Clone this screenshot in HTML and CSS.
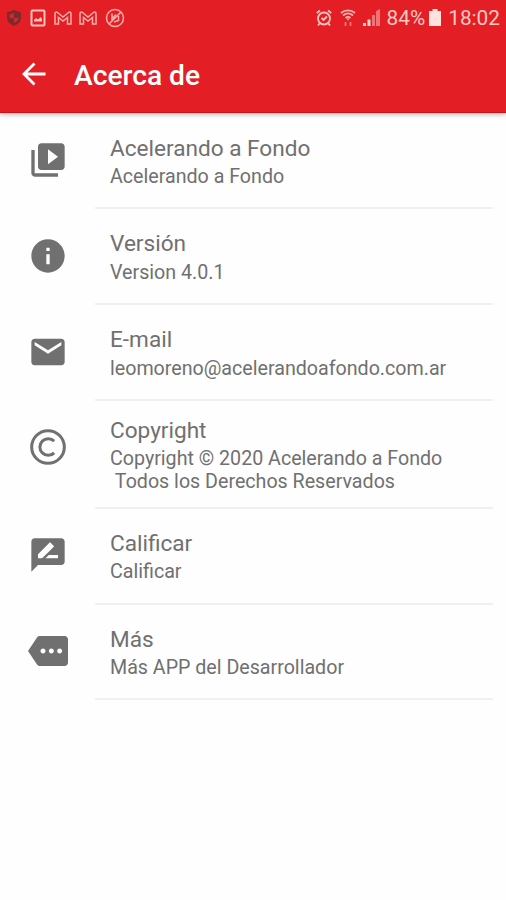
FILE: index.html
```
<!DOCTYPE html>
<html lang="es">
<head>
    <meta charset="utf-8">
    <meta name="viewport" content="width=device-width, initial-scale=1">
    <title>Acerca de</title>
    <link rel="stylesheet" href="styles.css">
</head>
<body>
    <header class="header">
        <div class="status-bar">
            <div class="status-left">
                <svg width="16" height="18" viewBox="0 0 16 18">
                    <path d="M8 1l7 2.500v5c0 4-3 7-7 8.500-4-1.500-7-4.500-7-8.500v-5z" fill="#7b2b2c"/>
                    <path d="M8 4v5H3.500V5.500zM8 9h4.500c-.5 2.500-2 4-4.500 5z" fill="#cf2a2e"/>
                </svg>
                <svg width="16" height="18" viewBox="0 0 16 18" fill="none" stroke="#fbc4bd" stroke-width="2">
                    <rect x="1.500" y="1.500" width="13" height="15" rx="1"/>
                    <path d="M4 12.500V11l2-2 2 1.500L10.500 8l1.500 2v2.500z" fill="#fbc4bd" stroke="none"/>
                </svg>
                <svg width="18" height="14" viewBox="0 0 18 14" fill="none" stroke="#f9b0aa" stroke-width="1.500">
                    <path d="M1 13V2.500C1 1 2.500.7 3.500 1.500L9 6l5.500-4.500C15.500.7 17 1 17 2.500V13h-3.500V6.500L9 10 4.500 6.500V13z"/>
                </svg>
                <svg width="18" height="14" viewBox="0 0 18 14" fill="none" stroke="#f9b0aa" stroke-width="1.500">
                    <path d="M1 13V2.500C1 1 2.500.7 3.500 1.500L9 6l5.500-4.500C15.500.7 17 1 17 2.500V13h-3.500V6.500L9 10 4.500 6.500V13z"/>
                </svg>
                <svg width="20" height="20" viewBox="0 0 20 20" fill="none" stroke="#f9b0aa" stroke-width="1.500">
                    <circle cx="10" cy="10" r="8.500"/>
                    <path d="M4 16L16 4M7 5.500V11l4-4.500M9 14l4.500-1.500V8"/>
                </svg>
            </div>
            <div class="status-right">
                <svg class="alarm" width="16" height="18" viewBox="0 0 16 18" fill="none" stroke="#fbc4bd" stroke-width="1.800">
                    <circle cx="8" cy="9.500" r="6"/>
                    <path d="M5.500 9l2 2 3.500-3.500M.8 4L4 1.500M15.200 4L12 1.500M4 14l-2 2.500M12 14l2 2.500"/>
                </svg>
                <svg class="wifi" width="16" height="18" viewBox="0 0 16 18" fill="none" stroke="#f9b4ae" stroke-width="1.800">
                    <path d="M1 4c4-3.500 10-3.500 14 0M3 6.500c3-2.500 7-2.500 10 0M5.500 9c1.500-1.300 3.500-1.300 5 0"/>
                    <path d="M6.500 9.500h3L8 11.500z" fill="#fbc4bd" stroke="none"/>
                    <path d="M5.500 13v4M10.500 13v4" stroke="#ef7775"/>
                </svg>
                <svg class="signal" width="17" height="17" viewBox="0 0 17 17">
                    <path d="M0 14h3v3H0zM4.500 10.500h3V17h-3z" fill="#fbd3cd"/>
                    <path d="M9 6h3v11H9zM13 2l4-2v17h-4z" fill="#f07476"/>
                </svg>
                <span class="percent">84%</span>
                <svg class="battery" width="12" height="17" viewBox="0 0 12 17">
                    <path d="M3.500 0h5v2H12v15H0V2h3.500z" fill="#fde3dc"/>
                </svg>
                <span class="clock">18:02</span>
            </div>
        </div>
        <div class="toolbar">
            <svg width="24" height="24" viewBox="0 0 24 24" fill="none" stroke="#fff" stroke-width="2.800">
                <path d="M23.500 12H3M12.500 1.500L2 12l10.500 10.500"/>
            </svg>
            <h1>Acerca de</h1>
        </div>
    </header>

    <main class="list">
        <div class="item">
            <svg class="icon" viewBox="0 0 24 24"><path d="M4 6H2v14c0 1.100.9 2 2 2h14v-2H4V6zm16-4H8c-1.100 0-2 .9-2 2v12c0 1.100.9 2 2 2h12c1.100 0 2-.9 2-2V4c0-1.100-.9-2-2-2zm-8 12.500v-9l6 4.500-6 4.500z"/></svg>
            <div class="content">
                <h2>Acelerando a Fondo</h2>
                <p>Acelerando a Fondo</p>
            </div>
        </div>
        <div class="item">
            <svg class="icon" viewBox="0 0 24 24"><path d="M12 2C6.480 2 2 6.480 2 12s4.480 10 10 10 10-4.480 10-10S17.520 2 12 2zm1 15h-2v-6h2v6zm0-8h-2V7h2v2z"/></svg>
            <div class="content">
                <h2>Versión</h2>
                <p>Version 4.0.1</p>
            </div>
        </div>
        <div class="item">
            <svg class="icon" viewBox="0 0 24 24"><path d="M20 4H4c-1.100 0-1.990.9-1.990 2L2 18c0 1.100.9 2 2 2h16c1.100 0 2-.9 2-2V6c0-1.100-.9-2-2-2zm0 4l-8 5-8-5V6l8 5 8-5v2z"/></svg>
            <div class="content">
                <h2>E-mail</h2>
                <p>leomoreno@acelerandoafondo.com.ar</p>
            </div>
        </div>
        <div class="item item-tall">
            <svg class="icon icon-line" viewBox="0 0 24 24"><circle cx="12" cy="12" r="9.800"/><path d="M15.700 8.500A5 5 0 1 0 15.700 15.500"/></svg>
            <div class="content">
                <h2>Copyright</h2>
                <p>Copyright © 2020 Acelerando a Fondo<br>&nbsp;Todos los Derechos Reservados</p>
            </div>
        </div>
        <div class="item">
            <svg class="icon" viewBox="0 0 24 24"><path d="M20 2H4c-1.100 0-1.990.9-1.990 2L2 22l4-4h14c1.100 0 2-.9 2-2V4c0-1.100-.9-2-2-2zM6 14v-2.470l6.880-6.880c.2-.2.510-.2.710 0l1.770 1.770c.2.200.2.510 0 .710L8.470 14H6zm12 0h-7.500l2-2H18v2z"/></svg>
            <div class="content">
                <h2>Calificar</h2>
                <p>Calificar</p>
            </div>
        </div>
        <div class="item">
            <svg class="icon" viewBox="0 0 24 24"><path d="M22 3H7c-.69 0-1.230.35-1.590.88L0 12l5.410 8.110c.36.530.9.890 1.590.890h15c1.100 0 2-.9 2-2V5c0-1.100-.9-2-2-2zM9 13.500c-.83 0-1.500-.67-1.500-1.500s.67-1.500 1.500-1.500 1.500.67 1.500 1.500-.67 1.500-1.500 1.500zm5 0c-.83 0-1.500-.67-1.500-1.500s.67-1.500 1.500-1.500 1.500.67 1.500 1.500-.67 1.500-1.500 1.500zm5 0c-.83 0-1.500-.67-1.500-1.500s.67-1.500 1.500-1.500 1.500.67 1.500 1.500-.67 1.500-1.500 1.500z"/></svg>
            <div class="content">
                <h2>Más</h2>
                <p>Más APP del Desarrollador</p>
            </div>
        </div>
    </main>
</body>
</html>
```
FILE: styles.css
```
body {
    font-family: Roboto, sans-serif;
    background-color: #fefefe;
    color: #707070;
    margin: 0;
    min-height: 100vh;
}

svg {
    display: block;
    flex-shrink: 0;
}

.header {
    height: 112px;
    background-color: #e31e25;
    border-bottom: 1px solid #c9141b;
    box-shadow: 0 1px 5px rgba(0, 0, 0, 0.35);
    color: #fff;
}

.status-bar {
    display: flex;
    justify-content: space-between;
    height: 35px;
    padding: 0 6px;
}

.status-left, .status-right {
    display: flex;
    align-items: center;
}

.status-left {
    gap: 7.800px;
}

.status-right {
    font-size: 20.800px;
    color: #fcc9c2;
}

.alarm {
    margin-right: 8px;
}

.wifi {
    margin-right: 7px;
}

.signal {
    margin-right: 7px;
}

.percent {
    margin-right: 4px;
}

.battery {
    margin-right: 7px;
}

.toolbar {
    display: flex;
    align-items: center;
    height: 78px;
    padding-left: 22px;
    gap: 28px;
}

.toolbar h1 {
    margin: 2px 0 0;
    font-size: 28.200px;
    font-weight: 500;
}

.list {
    padding-top: 0.800px;
}

.item {
    display: flex;
    height: 95.700px;
    padding-right: 13px;
}

.item-tall {
    height: 108px;
}

.icon {
    width: 40px;
    height: 40px;
    margin: 26.500px 27px 0 28.300px;
    fill: #707070;
}

.icon-line {
    fill: none;
    stroke: #707070;
    stroke-width: 1.800;
}

.content {
    flex: 1;
    box-sizing: border-box;
    padding: 22px 0 0 14.700px;
    border-bottom: 2px solid #f0f0f0;
}

.content h2 {
    margin: 0;
    font-size: 22.600px;
    font-weight: 400;
    line-height: 26px;
}

.content p {
    margin: 3.500px 0 0;
    font-size: 19.650px;
    line-height: 23px;
    white-space: nowrap;
}

.item-tall .content {
    padding-top: 17px;
}
```
